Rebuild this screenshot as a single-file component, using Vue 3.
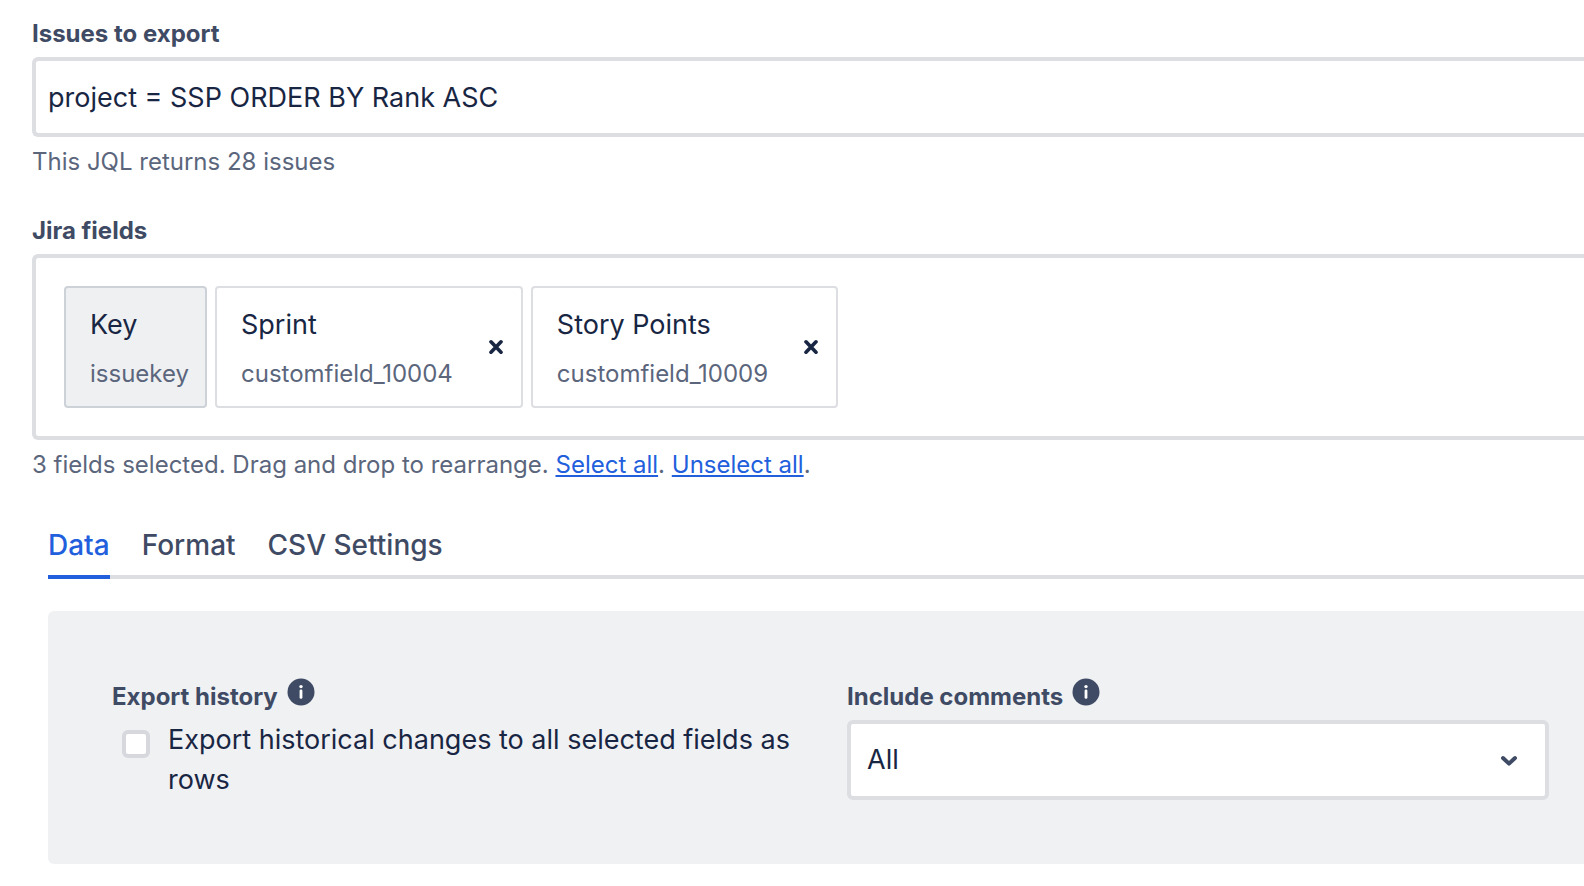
<script setup>
import { ref } from 'vue'

const jql = ref('project = SSP ORDER BY Rank ASC')
const fields = ref([
  { name: 'Key', id: 'issuekey', locked: true },
  { name: 'Sprint', id: 'customfield_10004', locked: false },
  { name: 'Story Points', id: 'customfield_10009', locked: false },
])
const tabs = ['Data', 'Format', 'CSV Settings']
const activeTab = ref('Data')
const history = ref(false)
const comments = ref('All')

function remove(id) {
  fields.value = fields.value.filter((f) => f.id !== id)
}
function unselectAll() {
  fields.value = fields.value.filter((f) => f.locked)
}
</script>

<template>
  <main class="page">
    <section class="group">
      <label class="label" for="jql">Issues to export</label>
      <input id="jql" v-model="jql" class="jql" type="text" />
      <p class="hint">This JQL returns 28 issues</p>
    </section>

    <section class="group">
      <h2 id="fields-label" class="label">Jira fields</h2>
      <ul class="fields" aria-labelledby="fields-label">
        <li v-for="f in fields" :key="f.id" class="chip" :class="{ locked: f.locked }">
          <div class="chip-text">
            <span class="chip-name">{{ f.name }}</span>
            <span class="chip-id">{{ f.id }}</span>
          </div>
          <button v-if="!f.locked" class="remove" type="button" :aria-label="'Remove ' + f.name" @click="remove(f.id)">
            <svg width="14" height="16" viewBox="0 0 14 16" aria-hidden="true">
              <path d="M2 2.8 L12 13.2 M12 2.8 L2 13.2" fill="none" stroke="currentColor" stroke-width="3.6" stroke-linecap="round" />
            </svg>
          </button>
        </li>
      </ul>
      <p class="hint">
        3 fields selected. Drag and drop to rearrange. <a href="#all" @click.prevent>Select all</a>. <a href="#none" @click.prevent="unselectAll">Unselect all</a>.
      </p>
    </section>

    <div class="settings">
      <div class="tabs" role="tablist">
        <button
          v-for="t in tabs"
          :key="t"
          class="tab"
          :class="{ active: t === activeTab }"
          type="button"
          role="tab"
          :aria-selected="t === activeTab"
          @click="activeTab = t"
        >{{ t }}</button>
      </div>

      <div class="panel" role="tabpanel">
        <div class="column">
          <div class="label-row">
            <span class="label">Export history</span>
            <svg class="info" width="28" height="28" viewBox="0 0 28 28" aria-hidden="true">
              <circle cx="14" cy="14" r="13.5" fill="currentColor" />
              <circle cx="14" cy="8.6" r="1.7" fill="#fff" />
              <path d="M14 12.8 V19.4" stroke="#fff" stroke-width="2.8" stroke-linecap="round" />
            </svg>
          </div>
          <div class="check-row">
            <input id="history" v-model="history" class="check" type="checkbox" />
            <label class="check-label" for="history">Export historical changes to all selected fields as rows</label>
          </div>
        </div>

        <div class="column">
          <div class="label-row">
            <label class="label" for="comments">Include comments</label>
            <svg class="info" width="28" height="28" viewBox="0 0 28 28" aria-hidden="true">
              <circle cx="14" cy="14" r="13.5" fill="currentColor" />
              <circle cx="14" cy="8.6" r="1.7" fill="#fff" />
              <path d="M14 12.8 V19.4" stroke="#fff" stroke-width="2.8" stroke-linecap="round" />
            </svg>
          </div>
          <div class="select-wrap">
            <select id="comments" v-model="comments" class="select">
              <option>All</option>
              <option>None</option>
            </select>
            <svg class="chevron" width="18" height="12" viewBox="0 0 18 12" aria-hidden="true">
              <path d="M3 4 L9 9.6 L15 4" fill="none" stroke="currentColor" stroke-width="4" stroke-linecap="round" stroke-linejoin="round" />
            </svg>
          </div>
        </div>
      </div>
    </div>
  </main>
</template>

<style>
body {
  margin: 0;
  background: #fff;
}
</style>

<style scoped>
.page {
  box-sizing: border-box;
  padding: 18px 0 22px 32px;
  font-family: Inter, "Liberation Sans", sans-serif;
  font-size: 27px;
  line-height: 40px;
  color: #182643;
}
.group {
  display: flex;
  flex-direction: column;
  margin-bottom: 37px;
}
.label {
  margin: 0;
  font-size: 24px;
  line-height: 32px;
  font-weight: 700;
  color: #3f4b64;
}
.group .label {
  margin-bottom: 7px;
}
.jql {
  box-sizing: border-box;
  width: 100%;
  height: 80px;
  margin: 0;
  padding: 0 12px;
  border: 4px solid #dddee2;
  border-right: 0;
  border-radius: 6px 0 0 6px;
  outline: none;
  background: #fff;
  font: inherit;
  color: inherit;
}
.hint {
  margin: 9px 0 0;
  font-size: 24px;
  line-height: 32px;
  color: #5b667d;
}
.hint a {
  color: #225fdd;
  text-decoration: underline;
}
.fields {
  display: flex;
  flex-wrap: wrap;
  gap: 8px;
  margin: 0;
  padding: 28px;
  border: 4px solid #dddee2;
  border-right: 0;
  border-radius: 6px 0 0 6px;
  list-style: none;
}
.chip {
  display: flex;
  align-items: center;
  gap: 28px;
  box-sizing: border-box;
  height: 122px;
  padding: 0 10px 0 24px;
  border: 2px solid #dddee2;
  border-radius: 4px;
}
.chip.locked {
  padding-right: 16px;
  border-color: #cdd1d8;
  background: #eff0f2;
}
.chip-text {
  display: flex;
  flex-direction: column;
  gap: 13px;
}
.chip-id {
  font-size: 24px;
  line-height: 32px;
  color: #5b667d;
}
.remove {
  display: flex;
  padding: 8px;
  border: 0;
  background: none;
  color: #182643;
  cursor: pointer;
}
.settings {
  padding-left: 16px;
}
.tabs {
  display: flex;
  gap: 32px;
  margin-top: 44px;
  margin-bottom: 32px;
  box-shadow: inset 0 -4px #dddee2;
}
.tab {
  padding: 0 0 10px;
  border: 0;
  border-bottom: 4px solid transparent;
  background: none;
  font: inherit;
  font-size: 28px;
  font-weight: 500;
  color: #3f4b64;
  cursor: pointer;
}
.tab.active {
  border-bottom-color: #225fdd;
  color: #225fdd;
}
.panel {
  display: grid;
  grid-template-columns: 1fr 1fr;
  gap: 33px;
  padding: 67px 35px 64px 64px;
  border-radius: 6px 0 0 6px;
  background: #f0f1f3;
}
.column {
  display: flex;
  flex-direction: column;
  gap: 7px;
}
.label-row {
  display: flex;
  align-items: flex-end;
  gap: 9px;
}
.info {
  margin-bottom: 7px;
  color: #3f4b64;
}
.check-row {
  display: flex;
  align-items: flex-start;
  gap: 18px;
  padding-left: 10px;
}
.check {
  appearance: none;
  flex: none;
  box-sizing: border-box;
  width: 28px;
  height: 28px;
  margin: 10px 0 0;
  border: 4px solid #d7d8dd;
  border-radius: 6px;
  background: #fff;
}
.check:checked {
  background: #225fdd;
}
.select-wrap {
  display: grid;
  align-items: center;
}
.select,
.chevron {
  grid-area: 1 / 1;
}
.select {
  appearance: none;
  box-sizing: border-box;
  width: 100%;
  height: 80px;
  padding: 0 60px 0 16px;
  border: 4px solid #dddee2;
  border-radius: 6px;
  background: #fff;
  font: inherit;
  color: inherit;
}
.chevron {
  justify-self: end;
  margin-right: 31px;
  color: #3f4b64;
  pointer-events: none;
}
</style>
